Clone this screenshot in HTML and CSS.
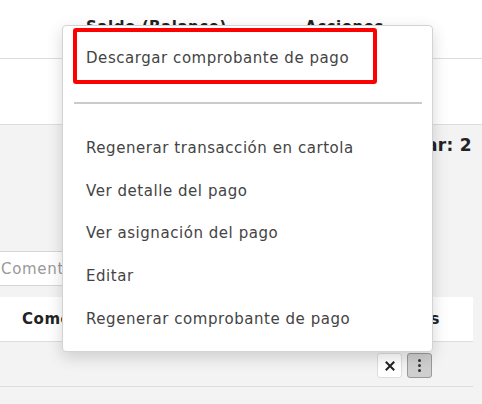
FILE: index.html
```html
<!DOCTYPE html>
<html lang="es">

<head>
  <meta charset="UTF-8">
  <meta name="viewport" content="width=device-width, initial-scale=1.0">
  <title>Pagos</title>
  <link rel="stylesheet" href="styles.css">
</head>

<body>
  <section class="top">
    <div class="head-row">
      <span></span>
      <span class="th">Saldo (Balance)</span>
      <span class="th">Acciones</span>
    </div>
    <div class="empty-row"></div>
  </section>
  <section class="panel">
    <p class="summary">Documentos por utilizar: 2</p>
    <div class="filter">
      <input type="text" placeholder="Comentario">
    </div>
    <div class="card">
      <div class="card-head">
        <span class="th">Comentario</span>
        <span class="th">Acciones</span>
      </div>
      <div class="card-row">
        <button class="btn btn-close">
          <svg width="10" height="10" viewBox="0 0 10 10"><path d="M1.5 1.5l7 7M8.5 1.5l-7 7" stroke="#222" stroke-width="2" stroke-linecap="square"/></svg>
        </button>
        <button class="btn btn-more">
          <span class="dot"></span><span class="dot"></span><span class="dot"></span>
        </button>
      </div>
    </div>
  </section>

  <ul class="menu">
    <li class="menu-item highlighted">Descargar comprobante de pago</li>
    <li class="menu-divider"></li>
    <li class="menu-item">Regenerar transacción en cartola</li>
    <li class="menu-item">Ver detalle del pago</li>
    <li class="menu-item">Ver asignación del pago</li>
    <li class="menu-item">Editar</li>
    <li class="menu-item">Regenerar comprobante de pago</li>
  </ul>
</body>

</html>
```

FILE: styles.css
```css
*,
*::before,
*::after {
  box-sizing: border-box;
}
body {
  margin: 0;
  background: #fff;
  color: #444;
  font-family: "DejaVu Sans", "Noto Sans", sans-serif;
  font-size: 15px;
  letter-spacing: .55px;
  overflow: hidden;
}
.th {
  color: #222;
  font-weight: bold;
}
.top .head-row {
  display: grid;
  grid-template-columns: 86px 219px 1fr;
  height: 59px;
  padding-top: 16px;
  line-height: 22px;
  border-bottom: 1px solid #ddd;
}
.top .empty-row {
  height: 66px;
  border-bottom: 1px solid #ddd;
}
.panel {
  background: #f3f3f3;
  padding-bottom: 20px;
}
.summary {
  margin: 0;
  padding: 9px 10px 0 0;
  text-align: right;
  line-height: 22px;
  font-size: 17px;
  font-weight: bold;
  letter-spacing: .3px;
  color: #222;
}
.filter {
  margin: 95px 0 0 -12px;
}
.filter input {
  width: 300px;
  height: 35px;
  padding: 0 12px;
  border: 1px solid #d6d6d6;
  background: #fff;
  font: inherit;
  font-size: 15px;
  letter-spacing: .7px;
  color: #444;
}
.filter input::placeholder {
  color: #999;
}
.card {
  margin: 11px 9px 0 0;
}
.card-head {
  display: flex;
  justify-content: space-between;
  height: 45px;
  padding: 0 33px 0 22px;
  align-items: center;
  background: #fff;
  border-bottom: 1px solid #ddd;
}
.card-row {
  display: flex;
  justify-content: flex-end;
  gap: 5px;
  height: 45px;
  padding: 11px 41px 0 0;
  border-bottom: 1px solid #ddd;
}
.btn {
  display: flex;
  align-items: center;
  justify-content: center;
  width: 25px;
  height: 25px;
  padding: 0;
  border-radius: 3px;
}
.btn-close {
  background: #fff;
  border: 1px solid #ddd;
}
.btn-more {
  flex-direction: column;
  gap: 2px;
  background: #cfcfcf;
  border: 1px solid #999;
}
.dot {
  width: 3px;
  height: 3px;
  border-radius: 50%;
  background: #333;
}

/* dropdown over the table */
.menu {
  position: absolute;
  top: 25px;
  left: 62px;
  width: 371px;
  margin: 0;
  padding: 2px 0 12px;
  list-style: none;
  background: #fff;
  border: 1px solid #d3d3d3;
  border-radius: 4px;
  box-shadow: 0 5px 16px rgba(0, 0, 0, .16);
}
.menu-item {
  height: 42.7px;
  padding: 0 0 0 23px;
  line-height: 44px;
  white-space: nowrap;
}
.menu-item.highlighted {
  width: 304px;
  height: 56px;
  margin-left: 10px;
  padding-left: 9px;
  line-height: 53px;
  border: 4px solid #f00;
  border-radius: 3px;
}
.menu-divider {
  height: 2px;
  margin: 18px 10px 22px 11px;
  background: #cbcbcb;
}
```
